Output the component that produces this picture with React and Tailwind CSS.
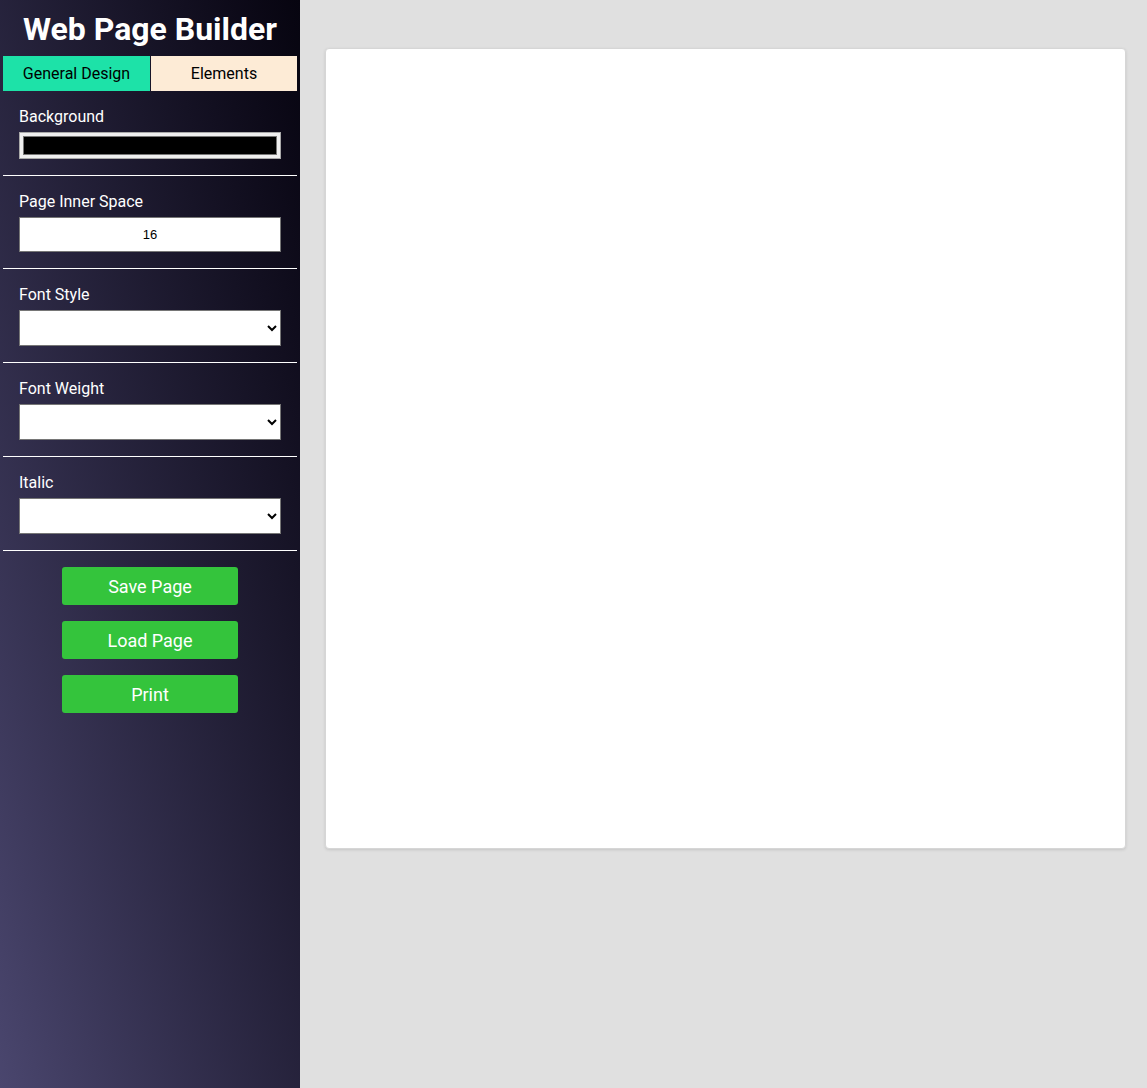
import { useState } from "react";

function Section({ label, children }) {
  return (
    <div className="px-4 pt-4 pb-4 border-b border-white">
      <div className="text-[16px] leading-[20px] text-white mb-[5px]">{label}</div>
      {children}
    </div>
  );
}

function Select() {
  return (
    <select className="block w-[262px] h-[36px] bg-white border border-[#767676] text-black text-[13px] px-1">
      <option value=""></option>
    </select>
  );
}

export default function App() {
  const [tab, setTab] = useState("general");
  const [space, setSpace] = useState("16");

  return (
    <div className="flex min-h-[1088px] font-['Roboto','Liberation_Sans',sans-serif]">
      <aside className="w-[300px] shrink-0 px-[3px] bg-linear-to-tr from-[#4a466e] to-[#070510]">
        <h1 className="text-center text-white font-bold text-[32px] leading-[56px] pt-px -mb-px">
          Web Page Builder
        </h1>
        <div className="flex h-[35px]">
          <button
            onClick={() => setTab("general")}
            className="w-[147px] bg-[#1de2a8] text-[16px] text-black"
          >
            General Design
          </button>
          <div className="w-px" />
          <button
            onClick={() => setTab("elements")}
            className="flex-1 bg-[#fdebd6] text-[16px] text-black"
          >
            Elements
          </button>
        </div>

        {tab === "general" && (
          <div>
            <Section label="Background">
              <div className="w-[262px] h-[27px] border border-[#a9a9a9] bg-[#efefef] p-[3px]">
                <div className="h-full bg-black border border-[#777]" />
              </div>
            </Section>
            <Section label="Page Inner Space">
              <input
                type="text"
                value={space}
                onChange={(e) => setSpace(e.target.value)}
                className="block w-[262px] h-[35px] bg-white border border-[#767676] text-center text-black text-[13px] font-['Liberation_Sans',sans-serif]"
              />
            </Section>
            <Section label="Font Style">
              <Select />
            </Section>
            <Section label="Font Weight">
              <Select />
            </Section>
            <Section label="Italic">
              <Select />
            </Section>
            <div className="flex flex-col items-center gap-4 pt-4">
              {["Save Page", "Load Page", "Print"].map((t) => (
                <button
                  key={t}
                  className="w-[176px] h-[38px] rounded-[3px] bg-[#34c43c] text-white text-[18px]"
                >
                  {t}
                </button>
              ))}
            </div>
          </div>
        )}
      </aside>

      <main className="flex-1 bg-[#e0e0e0] pl-[25px] pt-[48px]">
        <div className="w-[801px] h-[801px] bg-white rounded-[4px] border border-[#d6d6d6] shadow-[0_1px_3px_rgba(0,0,0,0.12)]" />
      </main>
    </div>
  );
}
